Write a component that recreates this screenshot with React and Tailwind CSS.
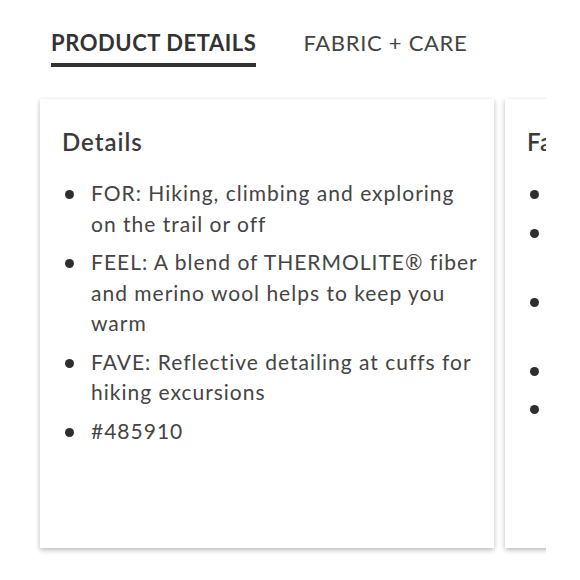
import React from 'react';

const details = [
  ['FOR: Hiking, climbing and exploring', 'on the trail or off'],
  ['FEEL: A blend of THERMOLITE® fiber', 'and merino wool helps to keep you', 'warm'],
  ['FAVE: Reflective detailing at cuffs for', 'hiking excursions'],
  ['#485910'],
];

const fabric = [
  ['Fabric: 63% polyester, 37% wool'],
  ['Lining: 100% polyester, brushed', 'for extra warmth'],
  ['Care: Machine wash cold, gentle', 'cycle, tumble dry low'],
  ['Imported'],
  ['Do not bleach'],
];

const Card = ({ title, items }) => (
  <div className="w-[454px] h-[449px] shrink-0 bg-white shadow-[0_2px_5px_rgba(0,0,0,0.28)] pl-[22px] pr-4 pt-[28px]">
    <h2 className="text-[24px] leading-[30px] font-semibold text-[#3a3a3a] tracking-[1px]">{title}</h2>
    <ul className="mt-[21px] flex flex-col gap-[8px]">
      {items.map((lines, i) => (
        <li key={i} className="flex text-[21px] leading-[30.5px] text-[#444] tracking-[1px]">
          <span className="w-[29px] shrink-0 pl-[3px] pt-[12px]">
            <span className="block w-[9px] h-[9px] rounded-full bg-[#2e2e2e]" />
          </span>
          <span className="whitespace-nowrap">
            {lines.map((l, j) => (
              <span key={j} className="block">{l}</span>
            ))}
          </span>
        </li>
      ))}
    </ul>
  </div>
);

export default function App() {
  return (
    <div className="w-[580px] h-[580px] bg-white font-['Lato',sans-serif]">
      <div className="flex items-end pl-[51px] pt-[28px]">
        <div className="flex flex-col">
          <span className="text-[22px] leading-[30px] font-bold text-[#333] tracking-[0.55px]">PRODUCT DETAILS</span>
          <span className="mt-[5px] h-[4px] w-full bg-[#333]" />
        </div>
        <span className="ml-[47px] mb-[9px] text-[22px] leading-[30px] text-[#444] tracking-[0.7px]">FABRIC + CARE</span>
      </div>
      <div className="mt-[30px] ml-[36px] w-[510px] overflow-hidden">
        <div className="flex gap-[11px] pl-[4px] pt-[2px] pb-[8px]">
          <Card title="Details" items={details} />
          <Card title="Fabric + Care" items={fabric} />
        </div>
      </div>
    </div>
  );
}
